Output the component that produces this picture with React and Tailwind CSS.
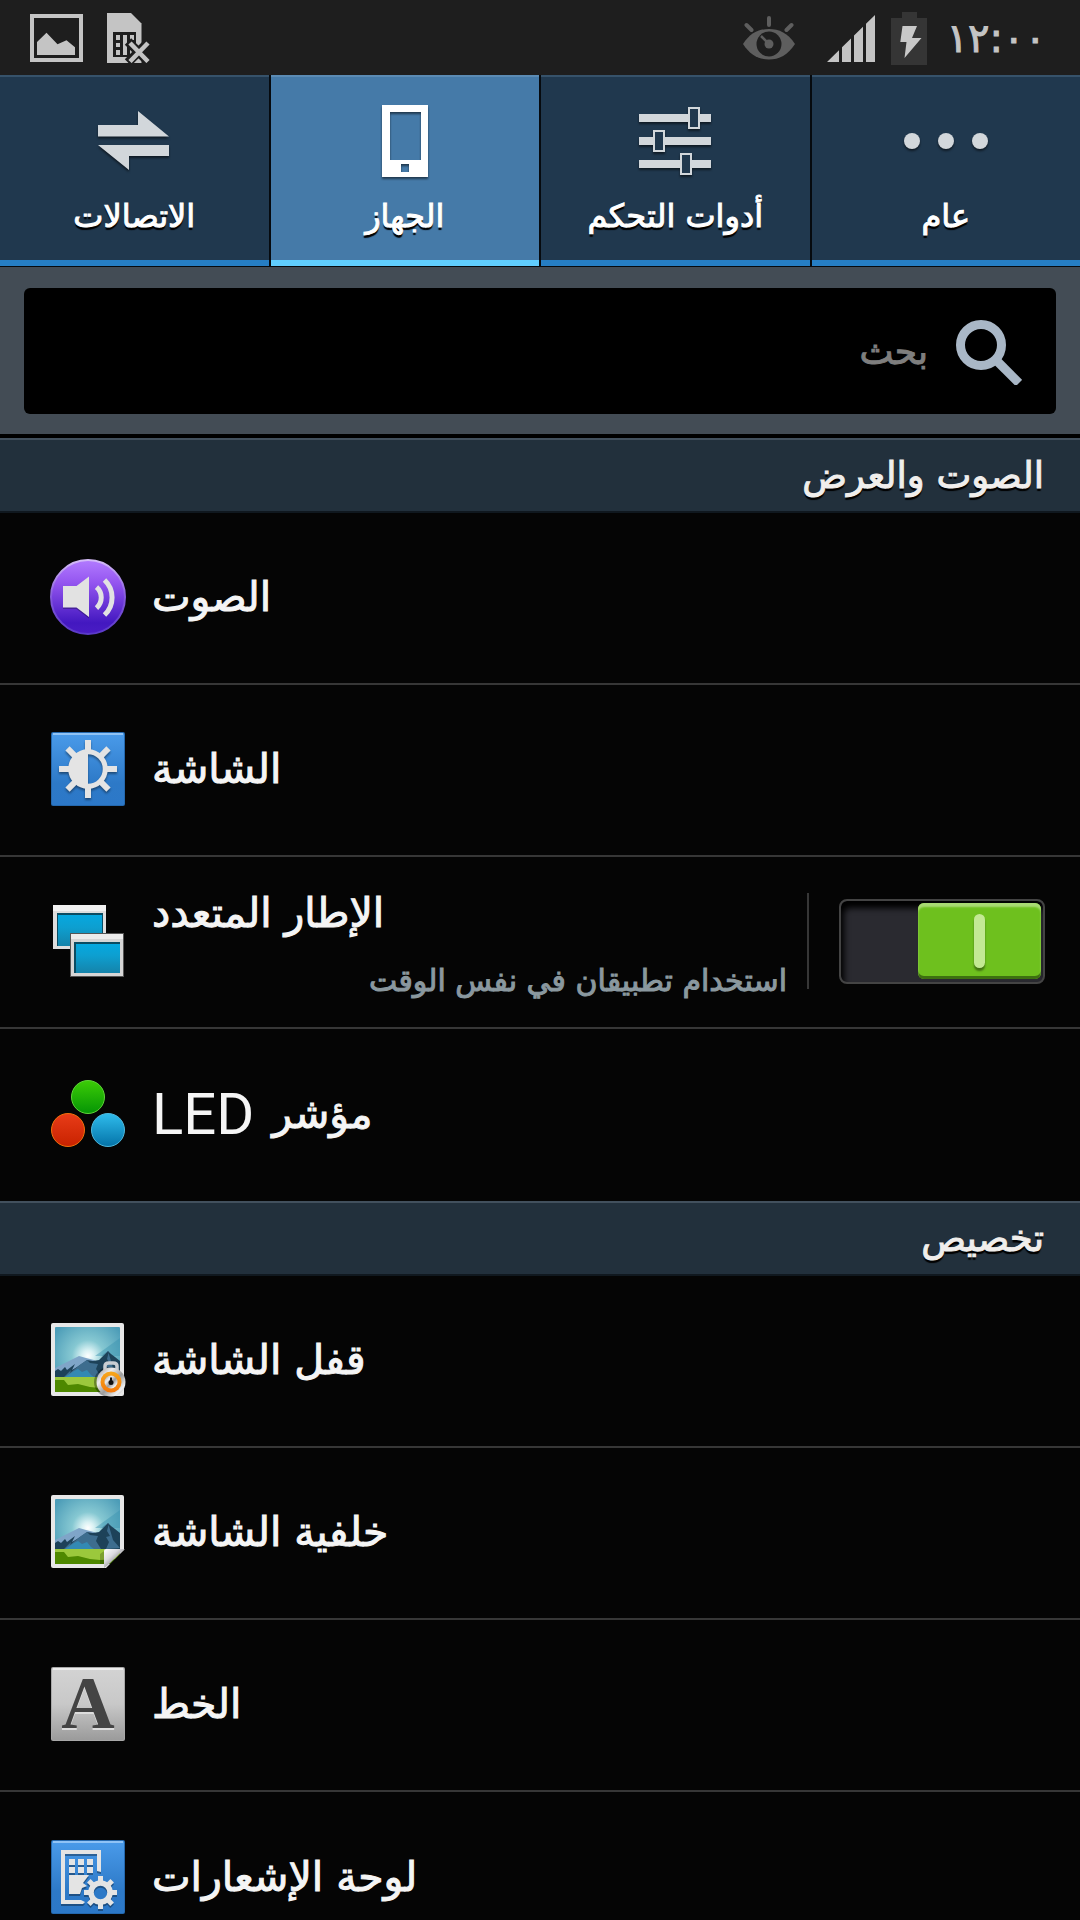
import { useState } from 'react';

/* ---------- status bar icons ---------- */

const PictureIcon = () => (
  <svg width="53" height="48" viewBox="0 0 53 48" fill="#c4c4c4">
    <path fillRule="evenodd" d="M0 0h53v48H0zM4 4v40h45V4z" />
    <path d="M7 41V28l9.500-9.300L27.500 30.300l9-4L45 33.300V41z" />
  </svg>
);

const SimErrorIcon = () => (
  <svg width="43" height="50" viewBox="0 0 43 50">
    <path fill="#c4c4c4" d="M0 0h24l10.500 10.500V50H0z" />
    <path fill="#1e1e1e" d="M6 19h23v25H6z" />
    <path fill="#c4c4c4" d="M9 22h4v5H9zM9 30h4v4H9zM9 37h4v5H9zM16 22h4v20h-4zM23 22h4v5h-4zM23 30h4v12h-4z" />
    <path stroke="#1e1e1e" strokeWidth="9" d="M21 28.500l21 21M42 28.500l-21 21" />
    <path stroke="#c4c4c4" strokeWidth="4.500" d="M23 30l18 18.500M41 30L23 48.500" />
  </svg>
);

const SmartStayIcon = () => (
  <svg width="52" height="44" viewBox="0 0 52 44">
    <g stroke="#5e5e5e" strokeWidth="4" strokeLinecap="round">
      <path d="M26 2v7M3.500 9l5 5M48.500 9l-5 5" />
    </g>
    <path fill="#5e5e5e" d="M0 28C7 17 16 13 26 13s19 4 26 15c-7 11-16 15.500-26 15.500S7 39 0 28z" />
    <circle cx="26" cy="28" r="12.500" fill="#1e1e1e" />
    <circle cx="26" cy="28" r="4.500" fill="#5e5e5e" />
    <path d="M18 20l7 7" stroke="#5e5e5e" strokeWidth="2.500" />
  </svg>
);

const SignalIcon = () => (
  <svg width="48" height="47" viewBox="0 0 48 47" fill="#c4c4c4">
    <path d="M0 47l12-11.750V47zM15 32.300l9-8.800V47h-9zM27 20.500l9-8.800V47h-9zM39 8.800L48 0v47h-9z" />
  </svg>
);

const BatteryIcon = () => (
  <svg width="36" height="53" viewBox="0 0 36 53">
    <path fill="#353535" d="M11 0h15v6h10v47H0V6h11z" />
    <path fill="#c9c9c9" d="M11.500 14h14.500l-5 12h9.500L13.500 46l2-16H9.300z" />
  </svg>
);

/* ---------- tab icons ---------- */

const ConnectionsIcon = () => (
  <svg width="72" height="60" viewBox="0 0 72 60" fill="#d2d7db" className="drop-shadow-[0_2px_1px_#0008]">
    <path d="M0 14h40V0l31 25.500H0zM0 34h71v11H31v14z" />
  </svg>
);

const DeviceIcon = () => (
  <svg width="46" height="72" viewBox="0 0 46 72" fill="#fff" className="drop-shadow-[0_2px_1px_#0008]">
    <path fillRule="evenodd" d="M0 0h46v72H0zM8 7v48h31V7zM19 59v8h8v-8z" />
  </svg>
);

const ControlsIcon = () => (
  <svg width="72" height="68" viewBox="0 0 72 68" className="drop-shadow-[0_2px_1px_#0008]">
    <path fill="#d2d7db" d="M0 7h72v8H0zM0 30h72v8H0zM0 53h72v8H0z" />
    <g fill="#20384e" stroke="#d2d7db" strokeWidth="2">
      <path d="M50 1h10v20H50zM15 24h10v20H15zM42 47h10v20H42z" />
    </g>
  </svg>
);

const MoreIcon = () => (
  <svg width="84" height="16" viewBox="0 0 84 16" fill="#d2d7db" className="drop-shadow-[0_2px_1px_#0008]">
    <circle cx="8" cy="8" r="8" />
    <circle cx="42" cy="8" r="8" />
    <circle cx="76" cy="8" r="8" />
  </svg>
);

const SearchIcon = () => (
  <svg width="66" height="66" viewBox="0 0 66 66" fill="none" stroke="#a9b7c6">
    <circle cx="25" cy="26" r="20.500" strokeWidth="9" />
    <path d="M39 40l24 24" strokeWidth="9" />
  </svg>
);

/* ---------- list icons ---------- */

const iconBox = { width: 76, height: 76, viewBox: '0 0 76 76', className: 'shrink-0 overflow-visible' };

const SoundIcon = () => (
  <svg {...iconBox}>
    <defs>
      <linearGradient id="sound" x1="0" y1="0" x2="0" y2="1">
        <stop offset="0" stopColor="#b27bff" />
        <stop offset=".3" stopColor="#9556f0" />
        <stop offset=".85" stopColor="#4318c0" />
        <stop offset="1" stopColor="#4a1cc4" />
      </linearGradient>
      <linearGradient id="soundRim" x1="0" y1="0" x2="0" y2="1">
        <stop offset="0" stopColor="#d5bdf8" />
        <stop offset=".5" stopColor="#8558dc" />
        <stop offset="1" stopColor="#5a3ac8" />
      </linearGradient>
    </defs>
    <circle cx="38" cy="38" r="37" fill="url(#sound)" stroke="url(#soundRim)" strokeWidth="2" />
    <path fill="#0004" d="M13 29h13.500L39 19.500v40L26.500 50H13z" />
    <path fill="#e2e2e2" d="M13 27h13.500L39 17.500V58L26.500 48.500H13z" />
    <g fill="none" stroke="#e2e2e2" strokeWidth="5">
      <path d="M46.500 28A14 14 0 0 1 46.500 49" />
      <path d="M54.500 21A24 24 0 0 1 54.500 56" />
    </g>
  </svg>
);

const BlueTile = ({ id }) => (
  <>
    <defs>
      <linearGradient id={id} x1="0" y1="0" x2="0" y2="1">
        <stop offset="0" stopColor="#4a9bea" />
        <stop offset=".7" stopColor="#2d79c7" />
        <stop offset="1" stopColor="#2c78c8" />
      </linearGradient>
    </defs>
    <rect x="1" y="1" width="74" height="74" rx="2" fill="#2468ae" />
    <rect x="2" y="2" width="72" height="72" rx="1" fill={`url(#${id})`} />
    <path fill="#8fc3f6" d="M3 2h70v2H3z" />
  </>
);

const rays = [0, 45, 90, 135, 180, 225, 270, 315];

const DisplayIcon = () => (
  <svg {...iconBox}>
    <BlueTile id="displayTile" />
    <g className="drop-shadow-[0_2px_1px_#0006]">
      {rays.map((deg) => (
        <path key={deg} fill="#e4e4e4" d="M35 9h6v13h-6z" transform={`rotate(${deg} 38 38)`} />
      ))}
      <circle cx="38" cy="38" r="17.250" fill="none" stroke="#e4e4e4" strokeWidth="5" />
      <path fill="#e4e4e4" d="M38 20a18 18 0 0 0 0 36z" />
    </g>
  </svg>
);

const MultiWindowIcon = () => (
  <svg {...iconBox}>
    <defs>
      <linearGradient id="pane" x1="0" y1="0" x2="0" y2="1">
        <stop offset="0" stopColor="#06a8df" />
        <stop offset=".4" stopColor="#0d9fd0" />
        <stop offset="1" stopColor="#1583aa" />
      </linearGradient>
    </defs>
    <path fill="#dedede" d="M3 2h53v44H3z" />
    <path fill="#f2f2f2" d="M3 2h53v6H3z" />
    <path fill="#0b4c62" d="M7 10h46v33H7z" />
    <path fill="url(#pane)" d="M8 12h44v31H8z" />
    <path fill="#555" d="M20 30h54v44H20z" />
    <path fill="#d6d6d6" d="M21 31h52v42H21z" />
    <path fill="#ececec" d="M21 31h52v5H21z" />
    <path fill="#0b4c62" d="M24 39h46v31H24z" />
    <path fill="url(#pane)" d="M26 41h44v29H26z" />
  </svg>
);

const LedIcon = () => (
  <svg {...iconBox}>
    <defs>
      <linearGradient id="ledGreen" x1="0" y1="0" x2="0" y2="1">
        <stop offset="0" stopColor="#3ccc06" />
        <stop offset="1" stopColor="#059505" />
      </linearGradient>
      <linearGradient id="ledRed" x1="0" y1="0" x2="0" y2="1">
        <stop offset="0" stopColor="#e83c18" />
        <stop offset="1" stopColor="#c82200" />
      </linearGradient>
      <linearGradient id="ledBlue" x1="0" y1="0" x2="0" y2="1">
        <stop offset="0" stopColor="#2fbcec" />
        <stop offset="1" stopColor="#0473a8" />
      </linearGradient>
    </defs>
    <g strokeWidth="1">
      <circle cx="38" cy="21" r="16.500" fill="url(#ledGreen)" stroke="#5fd43a" />
      <circle cx="18" cy="54" r="16.500" fill="url(#ledRed)" stroke="#f0700c" />
      <circle cx="58" cy="54" r="16.500" fill="url(#ledBlue)" stroke="#4fb8dc" />
    </g>
  </svg>
);

const Landscape = ({ id }) => (
  <>
    <defs>
      <radialGradient id={id} gradientUnits="userSpaceOnUse" cx="38" cy="34" r="40">
        <stop offset="0" stopColor="#fff" />
        <stop offset=".15" stopColor="#d8f1f3" />
        <stop offset=".4" stopColor="#86c8d2" />
        <stop offset="1" stopColor="#4d9db8" />
      </radialGradient>
    </defs>
    <rect x="1" y="1" width="73" height="73" rx="2" fill="#e8e8e8" />
    <rect x="5" y="5" width="65" height="65" rx="1" fill={`url(#${id})`} />
    <path fill="#3a93b0" fillOpacity=".45" d="M70 16v18H45z" />
    <path fill="#7fa5c8" d="M5 46l10-5 14-7 7 2 8 2 6 4v13H5z" />
    <path fill="#1d4259" d="M5 55v-6l3-2 3 2 4-4 2 3 8-6-3 6 5-3 6-4 4-3 6 1 6-1 9-9 3 3 4 3 5 4v18z" />
    <path fill="#3d6d8e" d="M14 55l7-7-1 3 11-9 6-4 3 3 8 1-2 5 5 8zM49 36l10-7-2 8 3 5-4 1 3 5-3 7 14-1-7-8-2-7-3-10z" />
    <path fill="#3389b3" d="M15 55l9-6 4-2 4 3 5-2 4 5 3 2z" />
    <path fill="#9bc83c" d="M5 55h65v15H5z" />
    <path fill="#4e8800" d="M5 58h9l4 5 10-1 12 3 10 1 20-1v5H5z" />
  </>
);

const LockScreenIcon = () => (
  <svg {...iconBox}>
    <Landscape id="lockSky" />
    <defs>
      <linearGradient id="steel" x1="0" y1="0" x2="1" y2="1">
        <stop offset="0" stopColor="#8f8f8f" />
        <stop offset=".3" stopColor="#ededed" />
        <stop offset=".55" stopColor="#9c9c9c" />
        <stop offset=".8" stopColor="#f0f0f0" />
        <stop offset="1" stopColor="#8a8a8a" />
      </linearGradient>
      <linearGradient id="amber" x1="0" y1="0" x2="0" y2="1">
        <stop offset="0" stopColor="#f6a81c" />
        <stop offset="1" stopColor="#f5780a" />
      </linearGradient>
    </defs>
    <circle cx="59" cy="60" r="15" fill="#0005" />
    <path d="M55 50v-6q0-3 4-3h4q4 0 4 3v6" fill="none" stroke="#c9ced3" strokeWidth="3.500" />
    <circle cx="61" cy="60" r="14.500" fill="url(#steel)" />
    <circle cx="61" cy="60" r="10.500" fill="url(#amber)" />
    <circle cx="61" cy="60" r="6.500" fill="url(#steel)" />
    <circle cx="61" cy="60.500" r="2.500" fill="#111" />
    <path fill="#111" d="M60 55.500h2v4h-2z" />
  </svg>
);

const WallpaperIcon = () => (
  <svg {...iconBox}>
    <Landscape id="wallSky" />
    <defs>
      <linearGradient id="curl" x1="0" y1="0" x2="1" y2="1">
        <stop offset="0" stopColor="#fff" />
        <stop offset=".35" stopColor="#dcdce0" />
        <stop offset=".5" stopColor="#b4b4b8" />
      </linearGradient>
    </defs>
    <path fill="#0003" d="M50 70V60l7-5h-2v15z" />
    <path fill="#050505" d="M54 76l22-22v22z" />
    <path fill="url(#curl)" d="M54 74V57q0-2 2-2h19q-3 2-6 5L60 69q-3 3-6 5z" />
  </svg>
);

const FontIcon = () => (
  <svg {...iconBox}>
    <defs>
      <linearGradient id="fontTile" x1="0" y1="0" x2="0" y2="1">
        <stop offset="0" stopColor="#d3d3d3" />
        <stop offset=".5" stopColor="#c8c8c8" />
        <stop offset="1" stopColor="#9b9b9b" />
      </linearGradient>
    </defs>
    <rect x="1" y="1" width="74" height="74" rx="2" fill="#a8a8a8" />
    <rect x="2" y="2" width="72" height="72" rx="1" fill="url(#fontTile)" />
    <path fill="#ececec" d="M3 2h70v2H3z" />
    <text
      x="38"
      y="62"
      textAnchor="middle"
      fill="#444"
      fontFamily="Liberation Serif, serif"
      fontWeight="700"
      fontSize="74"
      className="drop-shadow-[0_2px_0_#ddd]"
    >
      A
    </text>
  </svg>
);

const NotificationPanelIcon = () => (
  <svg {...iconBox}>
    <BlueTile id="panelTile" />
    <g className="drop-shadow-[0_2px_0_#0005]" fill="#e4e4e4">
      <path d="M11 11h40v22l-4-1V15H15v46h16l4 2-2 2H11z" />
      <path d="M19 20h6v6h-6zM28 20h6v6h-6zM37 20h6v6h-6zM19 28h6v6h-6zM28 28h6v6h-6zM37 28h6v6h-6z" />
      <path d="M19 36h20l-6 8 4 3-5 2-2 6H19z" />
      {rays.map((deg) => (
        <path key={deg} d="M48 37h5v7h-5z" transform={`rotate(${deg} 50.5 53.5)`} />
      ))}
      <circle cx="50.500" cy="53.500" r="9.500" fill="none" stroke="#e4e4e4" strokeWidth="5.500" />
    </g>
  </svg>
);

/* ---------- data ---------- */

const tabs = [
  { id: 'connections', label: 'الاتصالات', icon: ConnectionsIcon },
  { id: 'device', label: 'الجهاز', icon: DeviceIcon },
  { id: 'controls', label: 'أدوات التحكم', icon: ControlsIcon },
  { id: 'general', label: 'عام', icon: MoreIcon },
];

const sections = [
  {
    title: 'الصوت والعرض',
    items: [
      { label: 'الصوت', icon: SoundIcon },
      { label: 'الشاشة', icon: DisplayIcon },
      { label: 'الإطار المتعدد', hint: 'استخدام تطبيقان في نفس الوقت', icon: MultiWindowIcon, toggle: true },
      { label: 'مؤشر', latin: 'LED', icon: LedIcon },
    ],
  },
  {
    title: 'تخصيص',
    items: [
      { label: 'قفل الشاشة', icon: LockScreenIcon },
      { label: 'خلفية الشاشة', icon: WallpaperIcon },
      { label: 'الخط', icon: FontIcon },
      { label: 'لوحة الإشعارات', icon: NotificationPanelIcon },
    ],
  },
];

/* ---------- components ---------- */

const StatusBar = () => (
  <div className="flex h-[75px] shrink-0 items-center justify-between bg-[#1e1e1e] pt-px pr-[34px] pl-[30px]">
    <div className="flex items-center gap-6">
      <PictureIcon />
      <SimErrorIcon />
    </div>
    <div className="flex items-center gap-4">
      <div className="mr-4">
        <SmartStayIcon />
      </div>
      <SignalIcon />
      <BatteryIcon />
      <span dir="rtl" className="ml-1 text-[40px] leading-none text-[#c4c4c4] [-webkit-text-stroke:1px_#c4c4c4]">
        ١٢:٠٠
      </span>
    </div>
  </div>
);

const TabBar = ({ active, onSelect }) => (
  <div role="tablist" className="grid shrink-0 grid-cols-4 gap-[2px] bg-[#060a0e] pb-px">
    {tabs.map(({ id, label, icon: Icon }) => (
      <button
        key={id}
        type="button"
        role="tab"
        aria-selected={active === id}
        onClick={() => onSelect(id)}
        className={`flex flex-col items-center border-t-2 border-b-6 pt-7 pb-5 ${
          active === id
            ? 'border-t-[#5b8bb4] border-b-[#60ceff] bg-[#457aa8]'
            : 'border-t-[#36526a] border-b-[#267ec4] bg-[#20384e]'
        }`}
      >
        <span className="flex h-[72px] items-center">
          <Icon />
        </span>
        <span
          dir="rtl"
          className="mt-[15px] text-[32px] leading-[48px] whitespace-nowrap text-white [-webkit-text-stroke:1px_#fff] [text-shadow:0_3px_1px_#000]"
        >
          {label}
        </span>
      </button>
    ))}
  </div>
);

const SearchBox = () => (
  <div className="shrink-0 bg-[#434c55] px-6 pt-[21px] pb-5">
    <label dir="rtl" className="flex h-[126px] items-center gap-7 rounded-md bg-black pt-[2px] pr-[34px] pl-6">
      <SearchIcon />
      <input
        type="text"
        aria-label="بحث"
        placeholder="بحث"
        className="min-w-0 flex-1 bg-transparent text-[36px] text-white outline-none placeholder:text-[#7e7e7e] placeholder:[-webkit-text-stroke:1px_#7e7e7e]"
      />
    </label>
  </div>
);

const Toggle = ({ label }) => {
  const [on, setOn] = useState(true);

  return (
    <label className="block shrink-0 cursor-pointer">
      <input type="checkbox" checked={on} onChange={() => setOn(!on)} aria-label={label} className="sr-only" />
      <span
        className={`flex h-[85px] w-[206px] items-center rounded-lg border-2 border-[#444] bg-[#2a2a30] px-[2px] shadow-[inset_3px_7px_6px_#000] ${
          on ? 'justify-end' : 'justify-start'
        }`}
      >
        <span
          className={`flex h-[76px] w-[123px] items-center justify-center rounded-md ${
            on
              ? 'bg-[#6ec01e] shadow-[inset_0_4px_2px_#a9da74,inset_0_-3px_0_#3d7010]'
              : 'bg-[#55555c] shadow-[inset_0_4px_2px_#77777e,inset_0_-3px_0_#333338]'
          }`}
        >
          <span className="h-[54px] w-[11px] rounded-full bg-[#c3e994] shadow-[0_3px_2px_#0006]" />
        </span>
      </span>
    </label>
  );
};

const Row = ({ item, last }) => {
  const Icon = item.icon;

  return (
    <li
      className={`flex min-h-[172px] items-center pr-[35px] pb-[2px] pl-[50px] ${
        last ? '' : 'border-b-2 border-[#373737]'
      }`}
    >
      <a href="#" className="flex min-w-0 flex-1 items-center gap-[26px]">
        <Icon />
        <span className="flex flex-1 flex-col">
          <span
            dir="rtl"
            className={`flex items-center gap-[18px] self-start text-[41px] text-[#f5f5f5] ${
              item.hint ? 'leading-[80px]' : 'leading-[60px]'
            }`}
          >
            <span className="[-webkit-text-stroke:1px_#f5f5f5]">{item.label}</span>
            {item.latin && <span className="font-[Roboto,sans-serif] text-[58px]">{item.latin}</span>}
          </span>
          {item.hint && (
            <span dir="rtl" className="text-[30px] leading-[56px] text-[#8a989f] [-webkit-text-stroke:1px_#8a989f]">
              {item.hint}
            </span>
          )}
        </span>
      </a>
      {item.toggle && (
        <>
          <span className="mr-[30px] ml-5 h-24 w-[2px] shrink-0 bg-[#373737]" />
          <Toggle label={item.label} />
        </>
      )}
    </li>
  );
};

const Section = ({ title, items }) => (
  <section>
    <h2
      dir="rtl"
      className="border-t-2 border-b-2 border-t-[#42505d] border-b-[#10181f] bg-[#22303c] px-9 text-[37px] leading-[71px] text-[#f0eeec] [-webkit-text-stroke:1px_#f0eeec] [text-shadow:0_3px_1px_#000]"
    >
      {title}
    </h2>
    <ul>
      {items.map((item, i) => (
        <Row key={item.label} item={item} last={i === items.length - 1} />
      ))}
    </ul>
  </section>
);

export default function App() {
  const [active, setActive] = useState('device');

  return (
    <div className="flex h-screen flex-col overflow-hidden bg-[#050505] font-['DejaVu_Sans',sans-serif]">
      <StatusBar />
      <TabBar active={active} onSelect={setActive} />
      <SearchBox />
      <main className="min-h-0 flex-1 overflow-y-auto border-t-4 border-black [scrollbar-width:none]">
        {sections.map((section) => (
          <Section key={section.title} {...section} />
        ))}
      </main>
    </div>
  );
}
